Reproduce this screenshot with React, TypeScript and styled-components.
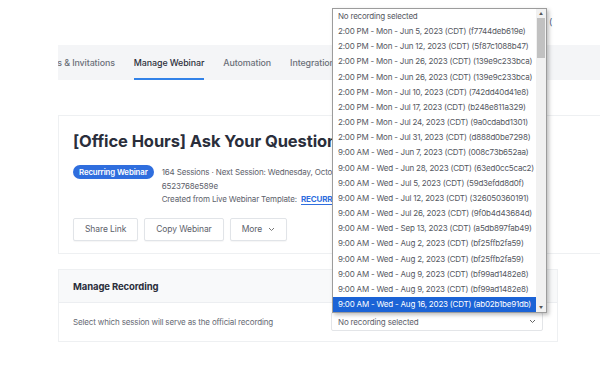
import React from "react";
import styled, { createGlobalStyle } from "styled-components";

const sessions = [
  "2:00 PM - Mon - Jun 5, 2023 (CDT) (f7744deb619e)",
  "2:00 PM - Mon - Jun 12, 2023 (CDT) (5f87c1088b47)",
  "2:00 PM - Mon - Jun 26, 2023 (CDT) (139e9c233bca)",
  "2:00 PM - Mon - Jun 26, 2023 (CDT) (139e9c233bca)",
  "2:00 PM - Mon - Jul 10, 2023 (CDT) (742dd40d41e8)",
  "2:00 PM - Mon - Jul 17, 2023 (CDT) (b248e811a329)",
  "2:00 PM - Mon - Jul 24, 2023 (CDT) (9a0cdabd1301)",
  "2:00 PM - Mon - Jul 31, 2023 (CDT) (d888d0be7298)",
  "9:00 AM - Wed - Jun 7, 2023 (CDT) (008c73b652aa)",
  "9:00 AM - Wed - Jun 28, 2023 (CDT) (63ed0cc5cac2)",
  "9:00 AM - Wed - Jul 5, 2023 (CDT) (59d3efdd8d0f)",
  "9:00 AM - Wed - Jul 12, 2023 (CDT) (326050360191)",
  "9:00 AM - Wed - Jul 26, 2023 (CDT) (9f0b4d43684d)",
  "9:00 AM - Wed - Sep 13, 2023 (CDT) (a5db897fab49)",
  "9:00 AM - Wed - Aug 2, 2023 (CDT) (bf25ffb2fa59)",
  "9:00 AM - Wed - Aug 2, 2023 (CDT) (bf25ffb2fa59)",
  "9:00 AM - Wed - Aug 9, 2023 (CDT) (bf99ad1482e8)",
  "9:00 AM - Wed - Aug 9, 2023 (CDT) (bf99ad1482e8)",
  "9:00 AM - Wed - Aug 16, 2023 (CDT) (ab02b1be91db)",
];

const tabs = ["Emails & Invitations", "Manage Webinar", "Automation", "Integrations", "Analytics"];

function App() {
  return (
    <>
      <GlobalStyle />
      <Page>
        <TabBar>
          <TabRow>
            {tabs.map((t) => (
              <Tab key={t} active={t === "Manage Webinar"}>
                {t}
              </Tab>
            ))}
          </TabRow>
        </TabBar>

        <Card>
          <CardBody>
            <Title>[Office Hours] Ask Your Questions Live</Title>
            <MetaRow>
              <Badge>Recurring Webinar</Badge>
              <MetaText>
                <MetaLine>164 Sessions · Next Session: Wednesday, October 18, 2023</MetaLine>
                <MetaLine>6523768e589e</MetaLine>
                <MetaLine>
                  Created from Live Webinar Template: <TemplateLink>RECURRING OFFICE HOURS</TemplateLink>
                </MetaLine>
              </MetaText>
            </MetaRow>
            <Buttons>
              <Button>Share Link</Button>
              <Button>Copy Webinar</Button>
              <Button>
                More
                <svg width="7" height="5" viewBox="0 0 7 5">
                  <path d="M1 1l2.5 2.5L6 1" fill="none" stroke="#777" strokeWidth="1" />
                </svg>
              </Button>
            </Buttons>
          </CardBody>
        </Card>

        <RecordingCard>
          <RecordingHeader>Manage Recording</RecordingHeader>
          <RecordingBody>
            <RecordingLabel>Select which session will serve as the official recording</RecordingLabel>
            <Select>
              No recording selected
              <svg width="7" height="5" viewBox="0 0 7 5">
                <path d="M1 1l2.5 2.5L6 1" fill="none" stroke="#666" strokeWidth="1" />
              </svg>
            </Select>
          </RecordingBody>
        </RecordingCard>

        <Dropdown>
          <OptionList>
            <Option>No recording selected</Option>
            {sessions.map((s, i) => (
              <Option key={i} selected={i === sessions.length - 1}>
                {s}
              </Option>
            ))}
          </OptionList>
          <Scrollbar>
            <Arrow>▲</Arrow>
            <Track>
              <Thumb />
            </Track>
            <Arrow>▼</Arrow>
          </Scrollbar>
        </Dropdown>
        <Peek>(</Peek>
      </Page>
    </>
  );
}

export default App;

const GlobalStyle = createGlobalStyle`
  html, body {
    margin: 0;
    padding: 0;
    background: #ffffff;
    font-family: "Inter", "Liberation Sans", sans-serif;
  }
  * {
    box-sizing: border-box;
  }
`;

const Page = styled.div`
  position: relative;
  width: 600px;
  height: 373px;
  overflow: hidden;
  padding: 45px 0 0 58px;
`;

const TabBar = styled.div`
  height: 35px;
  background: #f4f5f7;
  overflow: hidden;
`;

const TabRow = styled.div`
  display: flex;
  gap: 19px;
  height: 100%;
  margin-left: -23px;
`;

const Tab = styled.div<{ active?: boolean }>`
  display: flex;
  align-items: center;
  height: 100%;
  white-space: nowrap;
  font-size: 8.9px;
  letter-spacing: -0.1px;
  font-weight: 500;
  color: ${(p) => (p.active ? "#2b2f3a" : "#6b7079")};
  border-bottom: 2px solid ${(p) => (p.active ? "#3282e8" : "transparent")};
  padding-top: 2px;
`;

const Card = styled.div`
  margin-top: 35px;
  width: 560px;
  border: 1px solid #eef0f2;
  border-right: none;
  background: #ffffff;
`;

const CardBody = styled.div`
  padding: 13px 14px 12px 14px;
`;

const Title = styled.h1`
  margin: 0;
  font-size: 16.5px;
  letter-spacing: -0.1px;
  font-weight: 700;
  color: #2a2e3b;
  white-space: nowrap;
  line-height: 24px;
`;

const MetaRow = styled.div`
  display: flex;
  align-items: flex-start;
  gap: 8px;
  margin-top: 12px;
`;

const Badge = styled.span`
  flex-shrink: 0;
  height: 14px;
  padding: 0 6px;
  border-radius: 7px;
  background: #2f6ede;
  color: #ffffff;
  font-size: 7.8px;
  letter-spacing: -0.1px;
  font-weight: 600;
  line-height: 14px;
`;

const MetaText = styled.div`
  display: flex;
  flex-direction: column;
  margin-top: 1px;
`;

const MetaLine = styled.div`
  font-size: 8px;
  letter-spacing: -0.15px;
  line-height: 13.5px;
  color: #5d616b;
  white-space: nowrap;
`;

const TemplateLink = styled.span`
  color: #2f6ede;
  font-weight: 700;
  border-bottom: 1px solid #2f6ede;
  margin-left: 2px;
`;

const Buttons = styled.div`
  display: flex;
  gap: 6px;
  margin-top: 11px;
`;

const Button = styled.div`
  display: flex;
  align-items: center;
  gap: 6px;
  height: 23px;
  padding: 0 11px;
  border: 1px solid #e1e4e8;
  border-radius: 2px;
  box-shadow: 0 1px 1px rgba(0, 0, 0, 0.04);
  font-size: 8.5px;
  letter-spacing: -0.1px;
  color: #5d616b;
  background: #ffffff;
  white-space: nowrap;
`;

const RecordingCard = styled.div`
  margin-top: 15px;
  width: 500px;
  border: 1px solid #eef0f2;
`;

const RecordingHeader = styled.div`
  height: 33px;
  display: flex;
  align-items: center;
  padding-left: 14px;
  padding-top: 1px;
  background: #f8f9fa;
  border-bottom: 1px solid #eceef1;
  font-size: 9.5px;
  letter-spacing: -0.1px;
  font-weight: 700;
  color: #2a2e3b;
`;

const RecordingBody = styled.div`
  height: 38px;
  display: flex;
  align-items: center;
  justify-content: space-between;
  padding: 0 14px 0 14px;
`;

const RecordingLabel = styled.div`
  font-size: 8px;
  letter-spacing: -0.15px;
  color: #666a73;
`;

const Select = styled.div`
  width: 212px;
  height: 19px;
  display: flex;
  align-items: center;
  justify-content: space-between;
  padding: 0 6px;
  border: 1px solid #e3e5e8;
  border-radius: 2px;
  font-size: 8px;
  letter-spacing: -0.15px;
  color: #5d616b;
`;

const Dropdown = styled.div`
  position: absolute;
  left: 332px;
  top: 8px;
  width: 215px;
  height: 305px;
  display: flex;
  background: #ffffff;
  border: 1px solid #9c9c9c;
  box-shadow: 2px 2px 4px rgba(0, 0, 0, 0.25);
`;

const OptionList = styled.div`
  flex: 1;
  display: flex;
  flex-direction: column;
  min-width: 0;
`;

const Option = styled.div<{ selected?: boolean }>`
  height: 15.2px;
  line-height: 15.2px;
  padding-left: 5px;
  font-size: 8px;
  letter-spacing: -0.2px;
  white-space: nowrap;
  overflow: hidden;
  color: ${(p) => (p.selected ? "#ffffff" : "#55585f")};
  background: ${(p) => (p.selected ? "#1b63d6" : "transparent")};
`;

const Scrollbar = styled.div`
  width: 10px;
  display: flex;
  flex-direction: column;
  background: #f1f1f1;
`;

const Arrow = styled.div`
  height: 9px;
  font-size: 4px;
  line-height: 9px;
  text-align: center;
  color: #555;
`;

const Track = styled.div`
  flex: 1;
  padding: 0 1px;
`;

const Thumb = styled.div`
  height: 40px;
  background: #c1c1c1;
`;

const Peek = styled.div`
  position: absolute;
  left: 549px;
  top: 16px;
  font-size: 9px;
  color: #4a5a7a;
`;
